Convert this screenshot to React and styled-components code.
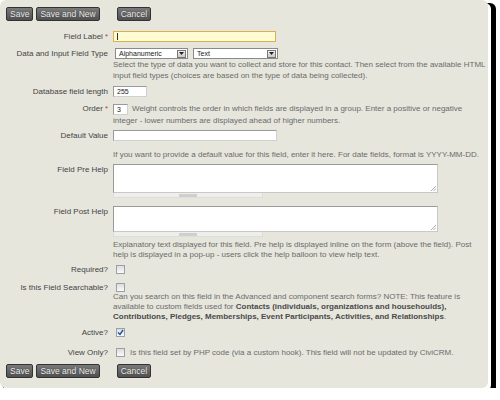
import React from 'react';
import styled, { createGlobalStyle } from 'styled-components';

const GlobalStyle = createGlobalStyle`
  html, body {
    margin: 0;
    padding: 0;
    background: #fff;
  }
  body {
    font-family: 'Liberation Sans', Arial, sans-serif;
    font-size: 8px;
    color: #444;
  }
`;

const Panel = styled.div`
  width: 488px;
  height: 388px;
  box-sizing: border-box;
  background: #e6e6dd;
  border-radius: 6px;
  padding: 7px 0 0 6px;
  box-shadow: 3px 3px 0 0 #fff, 8px 8px 0 0 #000, 8px 3px 0 0 #000, 3px 8px 0 0 #000;
`;

const Toolbar = styled.div`
  display: flex;
  align-items: center;
  height: 14px;
  margin-top: ${(p) => p.$mt || 0}px;
`;

const Button = styled.button`
  height: 14px;
  box-sizing: border-box;
  padding: 0 3px;
  margin-right: ${(p) => p.$gap || 3}px;
  font-family: 'Liberation Sans', Arial, sans-serif;
  font-size: 8.5px;
  line-height: 12px;
  color: #f2f2f2;
  text-shadow: 0 0 1px #222;
  background: linear-gradient(#7a7a7a, #505050);
  border: 1px solid #333;
  border-radius: 2px;
  cursor: pointer;
`;

const Row = styled.div`
  display: grid;
  grid-template-columns: 102px 1fr;
  column-gap: 5px;
  align-items: start;
  margin-top: ${(p) => p.$mt || 0}px;
`;

const Label = styled.div`
  text-align: right;
  line-height: ${(p) => p.$lh || 11}px;
  color: #444;
  white-space: nowrap;
`;

const Req = styled.span`
  color: #c0392b;
  margin-left: 2px;
`;

const Field = styled.div`
  display: flex;
  flex-direction: column;
  align-items: flex-start;
`;

const Line = styled.div`
  display: flex;
  align-items: flex-start;
  gap: ${(p) => p.$gap || 5}px;
`;

const TextInput = styled.div`
  width: ${(p) => p.$w}px;
  height: ${(p) => p.$h || 11}px;
  box-sizing: border-box;
  background: ${(p) => (p.$focus ? '#fffbd3' : '#fff')};
  border: 1px solid ${(p) => (p.$focus ? '#dcb04a' : '#9a9a9a')};
  border-right-color: ${(p) => (p.$focus ? '#dcb04a' : '#d0d0d0')};
  border-bottom-color: ${(p) => (p.$focus ? '#dcb04a' : '#d0d0d0')};
  font-size: 7px;
  line-height: 9px;
  padding-left: 3px;
  color: #222;
  flex-shrink: 0;
`;

const Caret = styled.span`
  display: inline-block;
  width: 1px;
  height: 7px;
  margin-top: 1px;
  background: #333;
`;

const Select = styled.div`
  width: ${(p) => p.$w}px;
  height: 11px;
  box-sizing: border-box;
  background: #fff;
  border: 1px solid #8a8a8a;
  display: flex;
  align-items: center;
  justify-content: space-between;
  padding-left: 3px;
  font-size: 7px;
  color: #222;
`;

const SelectArrow = styled.div`
  width: 9px;
  height: 8px;
  margin-right: 1px;
  box-sizing: border-box;
  border: 1px solid #777;
  background: linear-gradient(#f2f2f2, #c8c8c8);
  display: flex;
  align-items: center;
  justify-content: center;
`;

const Help = styled.div`
  color: #6b6b6b;
  line-height: ${(p) => p.$lh || 11}px;
  margin-top: ${(p) => p.$mt || 0}px;
  white-space: nowrap;
  b {
    color: #4a4a4a;
  }
`;

const TextArea = styled.div`
  position: relative;
  width: 325px;
  height: ${(p) => p.$h}px;
  box-sizing: border-box;
  background: #fff;
  border: 1px solid #9a9a9a;
  border-right-color: #c8c8c8;
  border-bottom-color: #c8c8c8;
`;

const Resize = styled.svg`
  position: absolute;
  right: 1px;
  bottom: 1px;
`;

const Grippie = styled.div`
  width: 150px;
  height: 5px;
  box-sizing: border-box;
  background: #eeeeea;
  border: 1px solid #ddd;
  border-top: 0;
  display: flex;
  justify-content: center;
  align-items: center;
`;

const Thumb = styled.div`
  width: 18px;
  height: 3px;
  background: #cfcfcf;
`;

const Box = styled.div`
  width: 9px;
  height: 9px;
  margin: 1px 0 0 3px;
  box-sizing: border-box;
  border: 1px solid #9aa0a8;
  background: linear-gradient(#dcdcdc, #fafafa);
  flex-shrink: 0;
  display: flex;
  align-items: center;
  justify-content: center;
`;

const Check = ({ checked }) => (
  <Box>
    {checked && (
      <svg width="7" height="7" viewBox="0 0 7 7">
        <path d="M1 3.5 L3 5.5 L6 1" fill="none" stroke="#1e4fa8" strokeWidth="1.4" />
      </svg>
    )}
  </Box>
);

const Arrow = () => (
  <SelectArrow>
    <svg width="5" height="3" viewBox="0 0 5 3">
      <path d="M0 0 H5 L2.5 3 Z" fill="#222" />
    </svg>
  </SelectArrow>
);

const Buttons = ({ mt }) => (
  <Toolbar $mt={mt}>
    <Button>Save</Button>
    <Button $gap={17}>Save and New</Button>
    <Button>Cancel</Button>
  </Toolbar>
);

export default function App() {
  return (
    <>
      <GlobalStyle />
      <Panel>
        <Buttons />

        <Row $mt={10}>
          <Label>
            Field Label<Req>*</Req>
          </Label>
          <Field>
            <TextInput $w={163} $focus>
              <Caret />
            </TextInput>
          </Field>
        </Row>

        <Row $mt={6}>
          <Label>Data and Input Field Type</Label>
          <Field>
            <Line>
              <Select $w={73} style={{ marginLeft: 2 }}>
                Alphanumeric
                <Arrow />
              </Select>
              <Select $w={85}>
                Text
                <Arrow />
              </Select>
            </Line>
            <Help $mt={0}>
              Select the type of data you want to collect and store for this contact. Then select from the available HTML
              <br />
              input field types (choices are based on the type of data being collected).
            </Help>
          </Field>
        </Row>

        <Row $mt={5}>
          <Label>Database field length</Label>
          <Field>
            <TextInput $w={34}>255</TextInput>
          </Field>
        </Row>

        <Row $mt={6}>
          <Label $lh={12}>
            Order<Req>*</Req>
          </Label>
          <Field>
            <Line $gap={4}>
              <TextInput $w={15} style={{ marginTop: 1 }}>3</TextInput>
              <Help $lh={12}>
                Weight controls the order in which fields are displayed in a group. Enter a positive or negative
              </Help>
            </Line>
            <Help $lh={12}>integer - lower numbers are displayed ahead of higher numbers.</Help>
          </Field>
        </Row>

        <Row $mt={3}>
          <Label>Default Value</Label>
          <Field>
            <TextInput $w={164} />
            <Help $mt={8}>
              If you want to provide a default value for this field, enter it here. For date fields, format is YYYY-MM-DD.
            </Help>
          </Field>
        </Row>

        <Row $mt={4}>
          <Label>Field Pre Help</Label>
          <Field>
            <TextArea $h={29}>
              <Resize width="5" height="5" viewBox="0 0 5 5">
                <path d="M5 0 L0 5 M5 2.5 L2.5 5" stroke="#999" strokeWidth="0.8" />
              </Resize>
            </TextArea>
            <Grippie>
              <Thumb />
            </Grippie>
          </Field>
        </Row>

        <Row $mt={8}>
          <Label>Field Post Help</Label>
          <Field>
            <TextArea $h={26}>
              <Resize width="5" height="5" viewBox="0 0 5 5">
                <path d="M5 0 L0 5 M5 2.5 L2.5 5" stroke="#999" strokeWidth="0.8" />
              </Resize>
            </TextArea>
            <Grippie>
              <Thumb />
            </Grippie>
            <Help $mt={3} $lh={10}>
              Explanatory text displayed for this field. Pre help is displayed inline on the form (above the field). Post
              <br />
              help is displayed in a pop-up - users click the help balloon to view help text.
            </Help>
          </Field>
        </Row>

        <Row $mt={4}>
          <Label>Required?</Label>
          <Field>
            <Check />
          </Field>
        </Row>

        <Row $mt={7}>
          <Label>Is this Field Searchable?</Label>
          <Field>
            <Check />
            <Help $mt={0} $lh={10}>
              Can you search on this field in the Advanced and component search forms? NOTE: This feature is
              <br />
              available to custom fields used for <b>Contacts (individuals, organizations and househoulds),</b>
              <br />
              <b>Contributions, Pledges, Memberships, Event Participants, Activities, and Relationships</b>.
            </Help>
          </Field>
        </Row>

        <Row $mt={5}>
          <Label>Active?</Label>
          <Field>
            <Check checked />
          </Field>
        </Row>

        <Row $mt={9}>
          <Label>View Only?</Label>
          <Field>
            <Line>
              <Check />
              <Help>Is this field set by PHP code (via a custom hook). This field will not be updated by CiviCRM.</Help>
            </Line>
          </Field>
        </Row>

        <Buttons mt={6} />
      </Panel>
    </>
  );
}
